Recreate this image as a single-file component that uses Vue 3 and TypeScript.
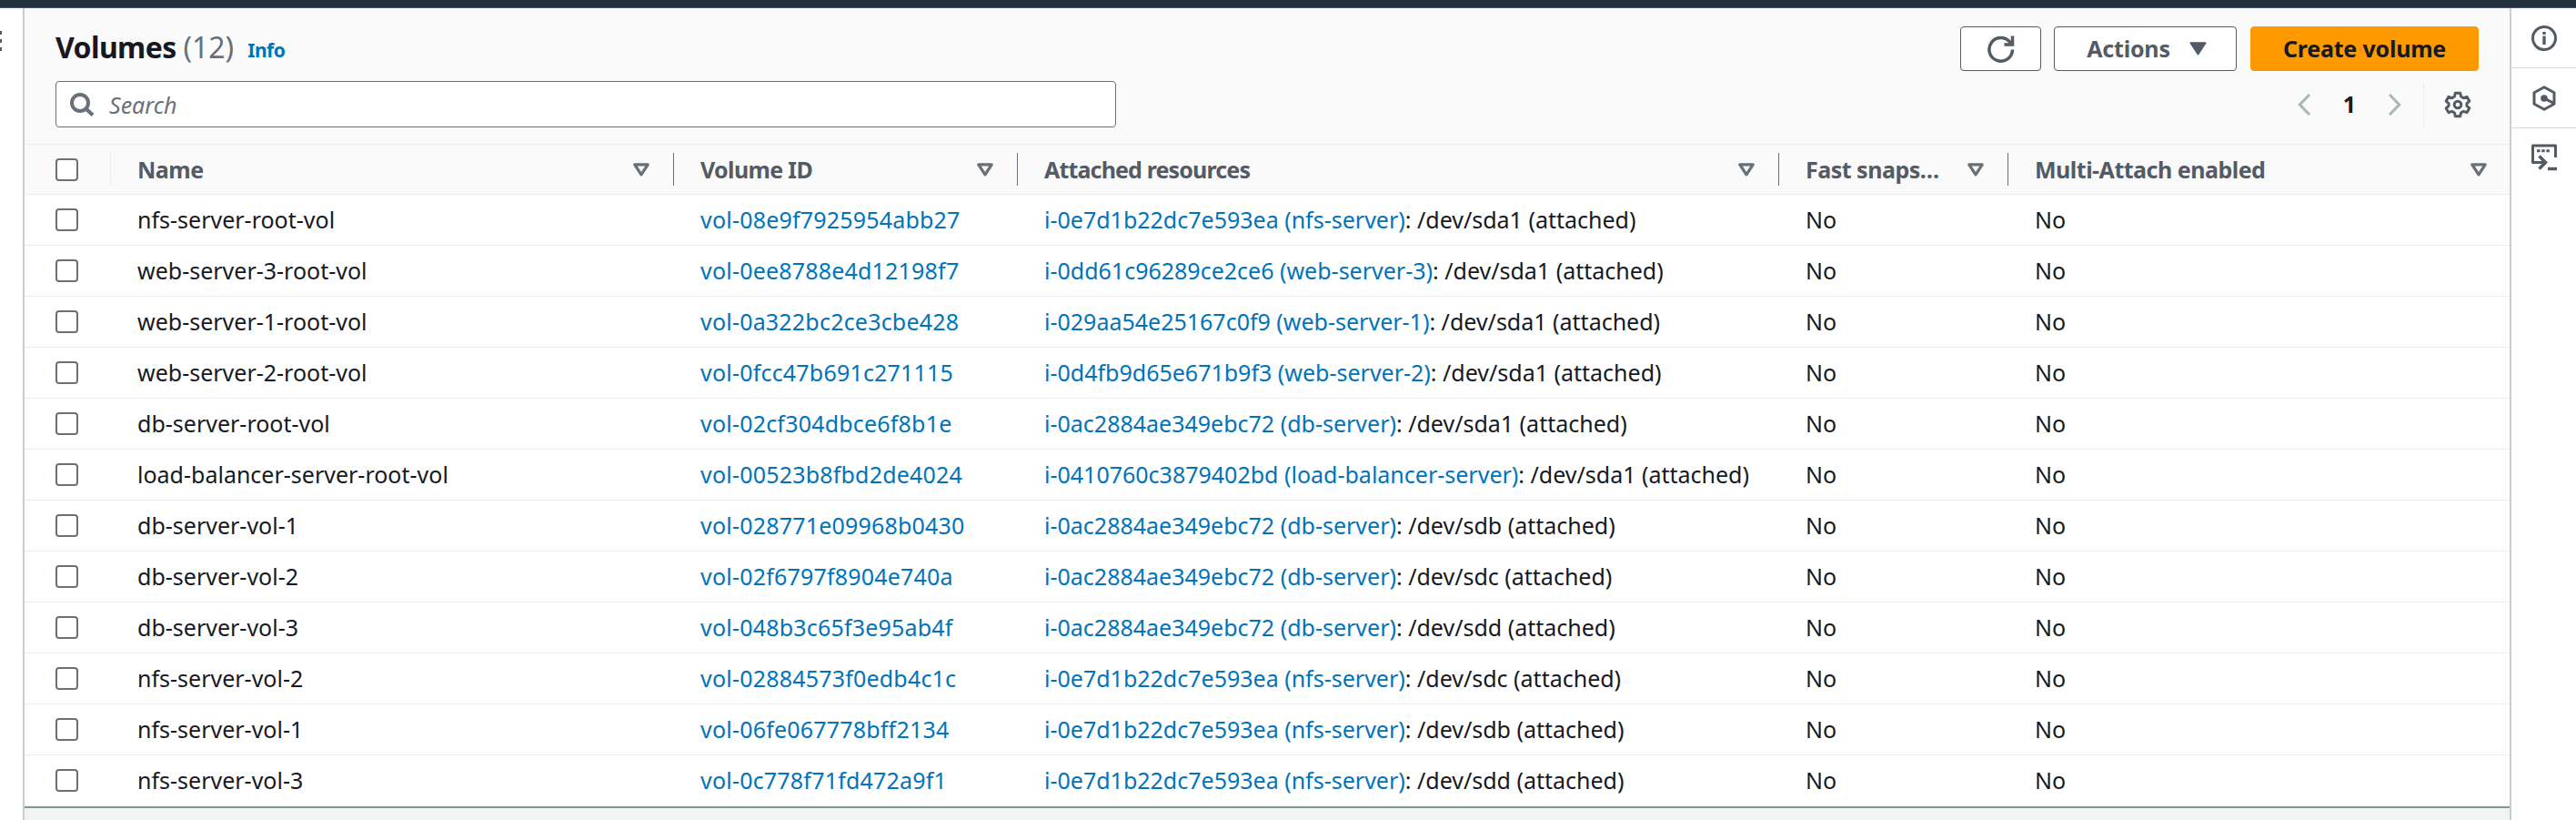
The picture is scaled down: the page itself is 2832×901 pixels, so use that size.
<script setup lang="ts">
interface Volume {
  name: string
  id: string
  instance: string
  device: string
}

interface Column {
  label: string
  key: string
}

const columns: Column[] = [
  { label: 'Name', key: 'name' },
  { label: 'Volume ID', key: 'id' },
  { label: 'Attached resources', key: 'res' },
  { label: 'Fast snaps…', key: 'fast' },
  { label: 'Multi-Attach enabled', key: 'multi' },
]

const NFS = 'i-0e7d1b22dc7e593ea (nfs-server)'
const DB = 'i-0ac2884ae349ebc72 (db-server)'

const volumes: Volume[] = [
  { name: 'nfs-server-root-vol', id: 'vol-08e9f7925954abb27', instance: NFS, device: '/dev/sda1' },
  { name: 'web-server-3-root-vol', id: 'vol-0ee8788e4d12198f7', instance: 'i-0dd61c96289ce2ce6 (web-server-3)', device: '/dev/sda1' },
  { name: 'web-server-1-root-vol', id: 'vol-0a322bc2ce3cbe428', instance: 'i-029aa54e25167c0f9 (web-server-1)', device: '/dev/sda1' },
  { name: 'web-server-2-root-vol', id: 'vol-0fcc47b691c271115', instance: 'i-0d4fb9d65e671b9f3 (web-server-2)', device: '/dev/sda1' },
  { name: 'db-server-root-vol', id: 'vol-02cf304dbce6f8b1e', instance: DB, device: '/dev/sda1' },
  { name: 'load-balancer-server-root-vol', id: 'vol-00523b8fbd2de4024', instance: 'i-0410760c3879402bd (load-balancer-server)', device: '/dev/sda1' },
  { name: 'db-server-vol-1', id: 'vol-028771e09968b0430', instance: DB, device: '/dev/sdb' },
  { name: 'db-server-vol-2', id: 'vol-02f6797f8904e740a', instance: DB, device: '/dev/sdc' },
  { name: 'db-server-vol-3', id: 'vol-048b3c65f3e95ab4f', instance: DB, device: '/dev/sdd' },
  { name: 'nfs-server-vol-2', id: 'vol-02884573f0edb4c1c', instance: NFS, device: '/dev/sdc' },
  { name: 'nfs-server-vol-1', id: 'vol-06fe067778bff2134', instance: NFS, device: '/dev/sdb' },
  { name: 'nfs-server-vol-3', id: 'vol-0c778f71fd472a9f1', instance: NFS, device: '/dev/sdd' },
]
</script>

<template>
  <div class="page">
    <div class="topbar"></div>
    <div class="body">
      <aside class="nav"><i></i><i></i><i></i></aside>
      <main class="panel">
        <header class="head">
          <div class="titlebar">
            <h1><span class="t-name">Volumes</span> <span class="t-count">(12)</span></h1>
            <a class="info">Info</a>
            <div class="buttons">
              <button class="btn refresh">
                <svg width="30" height="30" viewBox="0 0 30 30" fill="none" stroke="currentColor" stroke-width="3.500"><path d="M27.500 15.500A12.800 12.800 0 1 1 25.500 8.500" /><path d="M18.500 10h9V0.500" /></svg>
              </button>
              <button class="btn actions"><span class="label">Actions</span>
                <svg width="19" height="15" viewBox="0 0 19 15"><path d="M1.500 1.200h16L9.500 13.500z" fill="currentColor" stroke="currentColor" stroke-width="2" stroke-linejoin="round" /></svg>
              </button>
              <button class="btn create"><span class="label">Create volume</span></button>
            </div>
          </div>
          <div class="tools">
            <div class="search">
              <svg width="28" height="28" viewBox="0 0 28 28" fill="none" stroke="currentColor" stroke-width="4"><circle cx="12" cy="12" r="9" /><path d="M18 18l8 7.500" /></svg>
              <span>Search</span>
            </div>
            <div class="pager">
              <svg width="14" height="24" viewBox="0 0 14 24" fill="none" stroke="currentColor" stroke-width="3"><path d="M13 1L2.300 12 13 23" /></svg>
              <b>1</b>
              <svg width="14" height="24" viewBox="0 0 14 24" fill="none" stroke="currentColor" stroke-width="3"><path d="M1 1l10.700 11L1 23" /></svg>
            </div>
            <div class="gear">
              <svg width="30" height="30" viewBox="0 0 30 30" fill="none" stroke="currentColor" stroke-width="3" stroke-linejoin="round">
                <path d="M12.300 2.200h5.400l.8 3.800 2.900 1.700 3.700-1.300 2.700 4.700-2.800 2.500v2.800l2.800 2.500-2.700 4.700-3.700-1.300-2.900 1.700-.8 3.800h-5.400l-.8-3.800-2.900-1.700-3.700 1.300-2.700-4.700L5 16.400v-2.800l-2.800-2.500 2.700-4.700 3.700 1.300L11.500 6z" />
                <circle cx="15" cy="15" r="3.800" />
              </svg>
            </div>
          </div>
        </header>
        <div class="row thead">
          <div class="check"><i class="box"></i></div>
          <div v-for="c in columns" :key="c.key" class="cell th" :class="c.key">
            <span>{{ c.label }}</span>
            <svg width="18" height="15" viewBox="0 0 18 15" fill="none" stroke="currentColor" stroke-width="3.200" stroke-linejoin="round"><path d="M1.800 1.800h14.400L9 12.800z" /></svg>
          </div>
        </div>
        <div v-for="v in volumes" :key="v.id" class="row">
          <div class="check"><i class="box"></i></div>
          <div class="cell">{{ v.name }}</div>
          <div class="cell vid"><a>{{ v.id }}</a></div>
          <div class="cell res"><a>{{ v.instance }}</a>: {{ v.device }} (attached)</div>
          <div class="cell">No</div>
          <div class="cell">No</div>
        </div>
        <div class="split"></div>
      </main>
      <aside class="rail">
        <div class="tool">
          <svg width="28" height="28" viewBox="0 0 28 28" fill="none" stroke="currentColor" stroke-width="3"><circle cx="14" cy="14" r="12.500" /><path d="M14 11.500V21M14 7v3" stroke-width="3.400" /></svg>
        </div>
        <div class="tool">
          <svg width="28" height="28" viewBox="0 0 28 28" fill="none" stroke="currentColor" stroke-width="3"><path d="M14 1.800l11 6v12.400l-11 6-11-6V7.800z" stroke-linejoin="round" /><circle cx="14" cy="14" r="3.800" fill="currentColor" stroke="none" /><path d="M14 14l10 5.200" /></svg>
        </div>
        <div class="tool last">
          <svg width="28" height="30" viewBox="0 0 28 30" fill="none" stroke="currentColor" stroke-width="3"><path d="M26.500 15V2h-25v18.500H14" stroke-linejoin="round" /><path d="M8.500 13.500l7 7-7 7M18 27.500h10" stroke-width="3.500" /><path d="M6 7.800h14" stroke-dasharray="3.500 1.700" /></svg>
        </div>
      </aside>
    </div>
  </div>
</template>

<style>
body { margin: 0; background: #fff; }
</style>

<style scoped>
.page {
  width: 2832px; height: 901px; overflow: hidden; display: flex; flex-direction: column;
  font-family: "Noto Sans", "Open Sans", sans-serif; font-size: 25px; color: #16191f; box-sizing: border-box;
}
.page * { box-sizing: border-box; }
.topbar { height: 9px; flex: none; background: #232f3e; border-bottom: 1px solid #4a5563; }
.body { flex: 1; display: flex; min-height: 0; }
.nav { width: 25px; flex: none; padding-top: 25px; }
.nav i { display: block; width: 2px; height: 4px; margin-bottom: 5px; background: #545b64; }
.panel { width: 2736px; flex: none; border-left: 2px solid #c8cfd0; border-right: 2px solid #c8cfd0; display: flex; flex-direction: column; }
.head { height: 150px; flex: none; background: #fafafa; border-bottom: 1px solid #eaeded; padding: 20px 34px 0 34px; }
.titlebar { height: 49px; display: flex; align-items: center; }
h1 { margin: 0; padding-bottom: 3px; font-size: 32px; line-height: 40px; font-weight: 700; white-space: nowrap; letter-spacing: -0.6px; }
.t-count { color: #687078; font-weight: 400; letter-spacing: 0; }
.info { font-size: 21px; font-weight: 700; color: #0073bb; margin-left: 15px; letter-spacing: -0.5px; padding-top: 2px; }
.buttons { margin-left: auto; display: flex; }
.btn { height: 49px; border: 1px solid #545b64; border-radius: 4px; background: #fff; color: #545b64; font: inherit; font-weight: 700; padding: 0; display: flex; align-items: center; justify-content: center; white-space: nowrap; }
.label { padding-bottom: 2px; letter-spacing: -0.2px; }
.refresh { width: 89px; margin-right: 14px; }
.actions { width: 201px; gap: 21px; margin-right: 15px; padding-left: 3px; }
.create { width: 251px; background: #ff9900; border-color: #ff9900; color: #16191f; }
.tools { display: flex; align-items: center; height: 51px; margin-top: 11px; }
.search { width: 1166px; height: 51px; border: 1px solid #687078; border-radius: 4px; background: #fff; color: #687078; display: flex; align-items: center; padding-left: 14px; gap: 16px; font-style: italic; }
.pager { margin-left: auto; display: flex; align-items: center; gap: 36px; color: #aab7b8; }
.pager b { color: #16191f; padding-bottom: 1px; }
.gear { height: 49px; margin-left: 24px; padding-left: 22px; padding-right: 8px; border-left: 1px solid #eaeded; display: flex; align-items: center; color: #545b64; }
.row { height: 56px; flex: none; display: grid; grid-template-columns: 95px 619px 378px 837px 252px 1fr; border-bottom: 1px solid #eaeded; align-items: center; }
.thead { height: 55px; background: #fafafa; color: #545b64; font-weight: 700; }
.check { padding-left: 34px; height: 36px; display: flex; align-items: center; }
.thead .check { border-right: 1px solid #eaeded; }
.box { width: 25px; height: 25px; border: 2px solid #687078; border-radius: 4px; background: #fff; }
.cell { padding-left: 29px; padding-bottom: 1px; white-space: nowrap; }
.vid { letter-spacing: 0.2px; }
.th { height: 36px; display: flex; align-items: center; justify-content: space-between; padding-bottom: 0; padding-right: 26px; border-right: 1px solid #687078; color: #545b64; letter-spacing: -0.5px; }
.th span { padding-bottom: 1px; }
.th.res { letter-spacing: -0.85px; }
.th.id { letter-spacing: -0.65px; }
.th:last-child { border-right: 0; padding-right: 25px; }
.th svg { color: #687078; }
a { color: #0073bb; }
.split { flex: 1; background: #f2f3f3; border-top: 2px solid #879596; }
.rail { flex: 1; background: #fff; }
.tool { height: 66px; border-bottom: 1px solid #d5dbdb; display: flex; align-items: center; justify-content: center; color: #545b64; padding-left: 1px; }
.tool.last { border-bottom: 0; height: 63px; }
</style>
